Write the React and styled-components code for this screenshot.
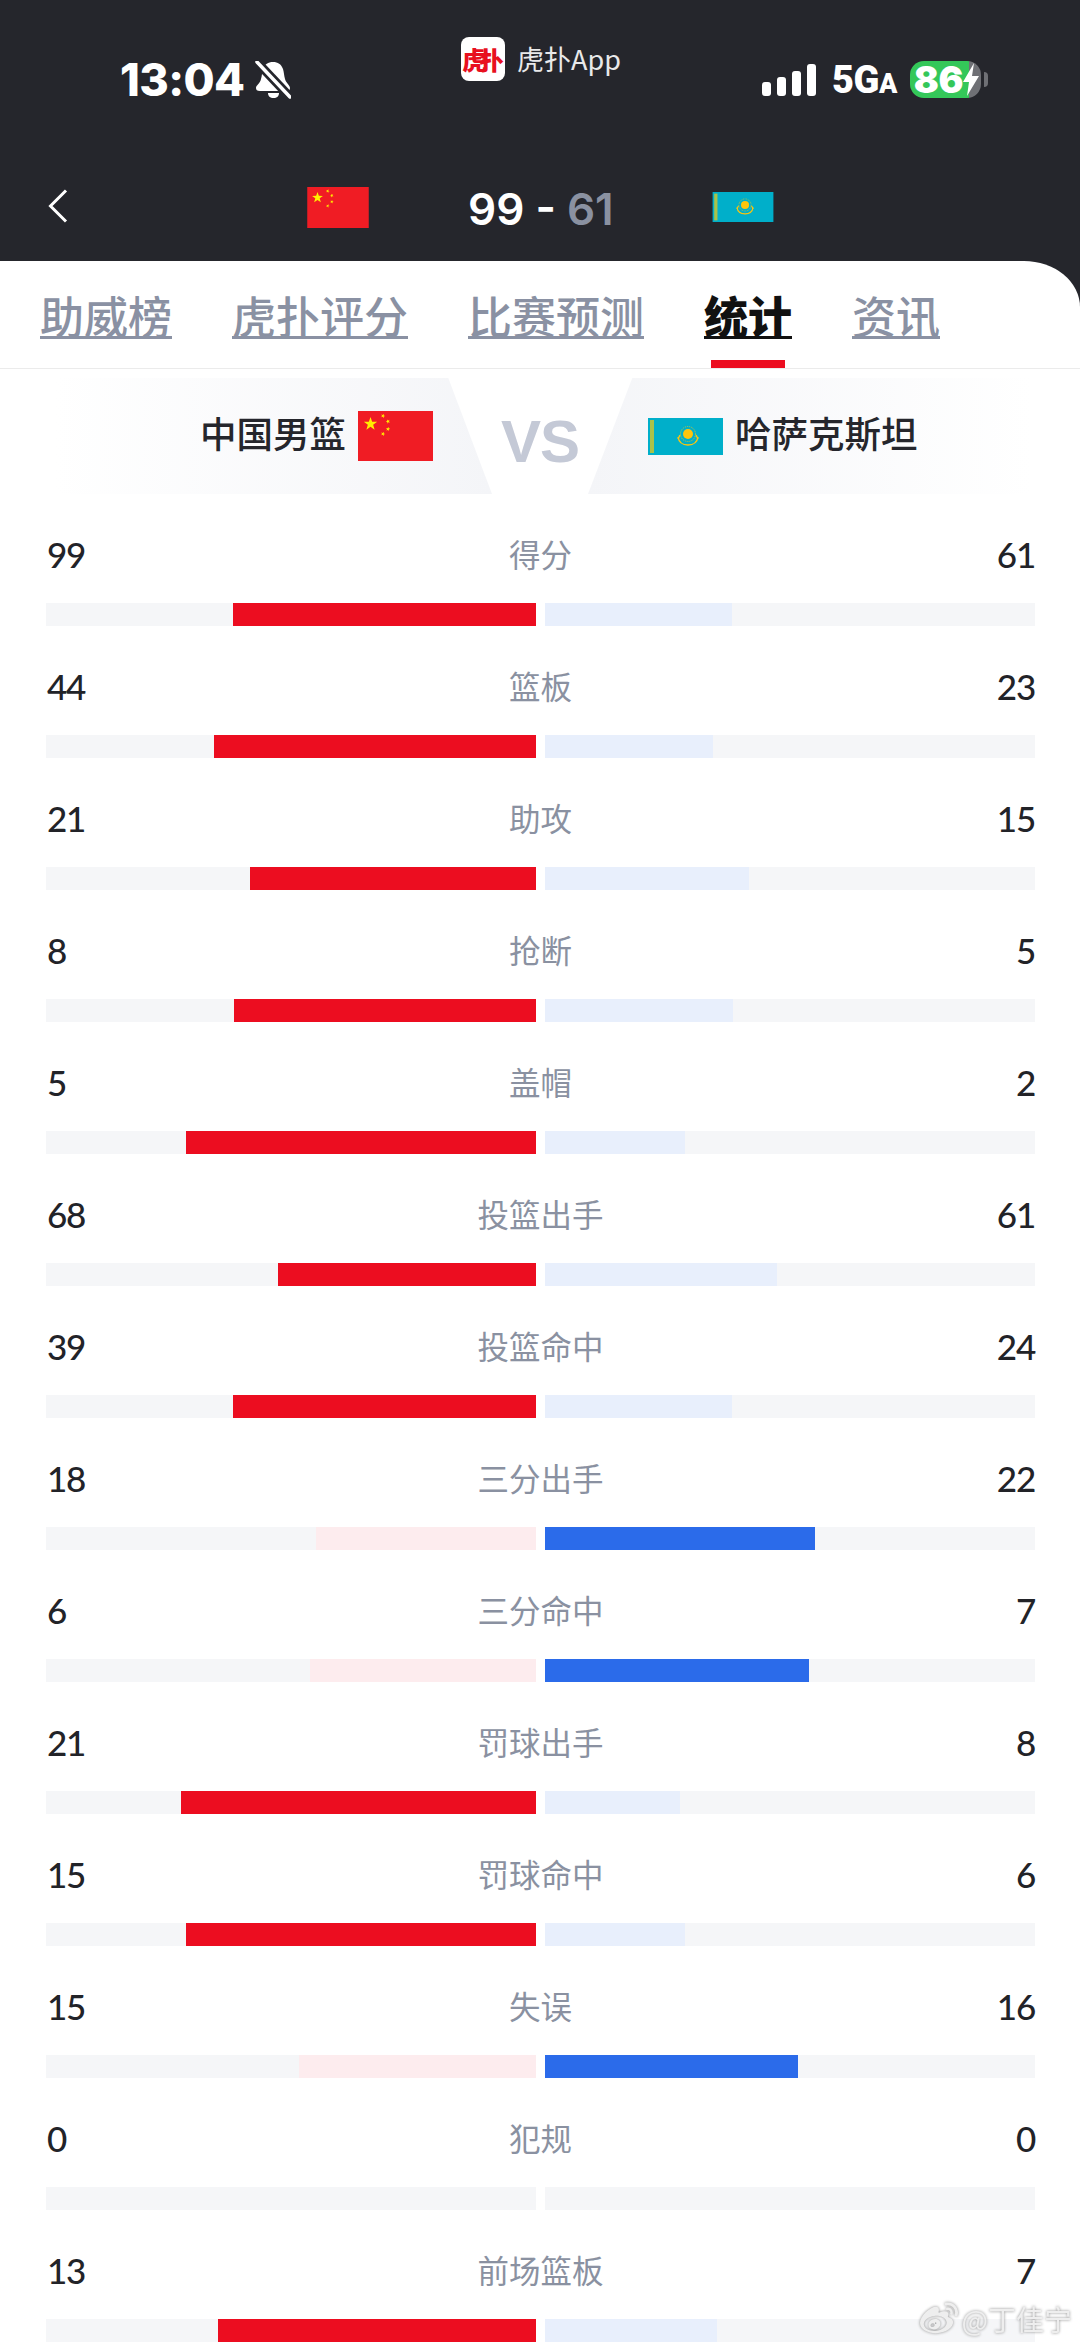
import styled, { createGlobalStyle } from 'styled-components';
import { FaWeibo } from 'react-icons/fa';

const CJK = '"Noto Sans CJK SC", "Noto Sans", sans-serif';

const GlobalStyle = createGlobalStyle`
  html, body {
    margin: 0;
    padding: 0;
    background: #fff;
  }
  #root {
    width: 1080px;
    height: 2347px;
    overflow: hidden;
  }
`;

const Page = styled.div`
  position: relative;
  width: 1080px;
  height: 2347px;
  overflow: hidden;
  background: #25262c;
  font-family: ${CJK};
`;

const Header = styled.header`
  height: 261px;
  color: #fff;
`;

const StatusBar = styled.div`
  display: flex;
  align-items: flex-start;
  height: 160px;
  padding-left: 120px;
`;

const StatusLeft = styled.div`
  display: flex;
  align-items: center;
  gap: 11px;
  width: 341px;
  padding-top: 54px;
`;

const Time = styled.span`
  font: 800 45px/52px Inter, sans-serif;
  letter-spacing: -0.6px;
`;

const AppBadge = styled.div`
  display: flex;
  align-items: center;
  gap: 12px;
  width: 301px;
  padding-top: 37px;
`;

const AppLogo = styled.div`
  display: flex;
  align-items: center;
  justify-content: center;
  width: 44px;
  height: 44px;
  border-radius: 8px;
  background: #fff;
  color: #e8101e;
  font: 900 25px/44px ${CJK};
  letter-spacing: -8px;
  padding-right: 8px;
  box-sizing: border-box;
`;

const AppName = styled.span`
  font-size: 27px;
  line-height: 44px;
  color: #e9e9ea;
`;

const StatusRight = styled.div`
  display: flex;
  align-items: flex-end;
  height: 37px;
  margin-top: 61px;
`;

const Signal = styled.div`
  display: flex;
  align-items: flex-end;
  gap: 6px;
  margin-bottom: 2px;
`;

const SignalBar = styled.i`
  display: block;
  width: 9px;
  height: ${(p) => p.$h}px;
  border-radius: 3px;
  background: #fff;
`;

const Network = styled.span`
  margin-left: 16px;
  margin-bottom: -2px;
  font: 900 38px/32px Roboto, sans-serif;
  letter-spacing: -0.5px;
  & small {
    font-size: 27px;
  }
`;

const Battery = styled.div`
  position: relative;
  display: flex;
  align-items: center;
  width: 71px;
  height: 37px;
  margin-left: 13px;
  padding-left: 4px;
  box-sizing: border-box;
  border-radius: 14px;
  background: linear-gradient(90deg, #34c759 59px, #6f7075 59px);
  font: 900 37px/37px Inter, sans-serif;
  letter-spacing: -0.5px;
  &::after {
    content: '';
    position: absolute;
    right: -7px;
    top: 11px;
    width: 4px;
    height: 15px;
    border-radius: 0 4px 4px 0;
    background: #6f7075;
  }
`;

const ScoreRow = styled.div`
  display: flex;
  align-items: center;
  height: 94px;
  padding-left: 48px;
`;

const BackButton = styled.div`
  display: flex;
  width: 259px;
`;

const ScoreGroup = styled.div`
  display: flex;
  align-items: center;
  gap: 99px;
`;

const Score = styled.div`
  width: 145px;
  padding-top: 3px;
  font: 600 44px/50px Inter, sans-serif;
  white-space: nowrap;
  & span {
    color: #8a91a1;
  }
`;

const Card = styled.main`
  height: 2086px;
  background: #fff;
  border-top-right-radius: 56px 46px;
`;

const Tabs = styled.nav`
  display: flex;
  gap: 60px;
  height: 108px;
  padding-left: 40px;
  border-bottom: 1px solid #ebebeb;
  box-sizing: border-box;
`;

const Tab = styled.div`
  position: relative;
  padding-top: 22px;
  font-size: 44px;
  line-height: 64px;
  font-weight: ${(p) => (p.$active ? 900 : 500)};
  color: ${(p) => (p.$active ? '#111' : '#8a91a3')};
  text-decoration: underline;
  text-decoration-thickness: 3px;
  text-underline-offset: 2px;
  &::after {
    content: ${(p) => (p.$active ? '""' : 'none')};
    position: absolute;
    left: 7px;
    right: 7px;
    bottom: 0;
    height: 8px;
    background: #ec0d20;
  }
`;

const VersusBand = styled.section`
  display: flex;
  height: 116px;
  margin-top: 9px;
  padding-left: 55px;
`;

const TeamSide = styled.div`
  display: flex;
  align-items: center;
  gap: 12px;
  box-sizing: border-box;
  height: 100%;
  font-size: 36.500px;
  font-weight: 500;
  color: #25262c;
  ${(p) =>
    p.$right
      ? `
    width: 443px;
    padding-left: 60px;
    background: linear-gradient(90deg, #f4f5f8, #ffffff);
    clip-path: polygon(10% 0, 100% 0, 100% 100%, 0 100%);
  `
      : `
    width: 437px;
    padding-right: 59px;
    justify-content: flex-end;
    background: linear-gradient(90deg, #ffffff, #f4f5f8);
    clip-path: polygon(0 0, 90% 0, 100% 100%, 0 100%);
  `}
`;

const TeamName = styled.span`
  line-height: 44px;
  margin-top: -7px;
`;

const VersusMark = styled.div`
  width: 96px;
  padding-top: 11px;
  text-align: center;
  font: 700 60px/105px "Liberation Sans", sans-serif;
  letter-spacing: -1px;
  color: #c4c9d6;
  box-sizing: border-box;
  height: 100%;
`;

const StatList = styled.section`
  display: flex;
  flex-direction: column;
  gap: 41px;
  padding: 41px 45px 0 46px;
`;

const StatRow = styled.div`
  display: flex;
  flex-direction: column;
  gap: 28px;
`;

const StatHead = styled.div`
  display: grid;
  grid-template-columns: 1fr auto 1fr;
  align-items: center;
  height: 40px;
`;

const StatValue = styled.span`
  font: 500 35px/40px Lato, Roboto, sans-serif;
  letter-spacing: -1.200px;
  margin-top: -2px;
  color: #222328;
  text-align: ${(p) => (p.$right ? 'right' : 'left')};
  padding: ${(p) => (p.$right ? '0' : '0 0 0 1px')};
`;

const StatLabel = styled.span`
  font-size: 31.500px;
  line-height: 40px;
  margin-top: -4px;
  color: #8a91a1;
`;

const BarPair = styled.div`
  display: grid;
  grid-template-columns: 1fr 1fr;
  gap: 9px;
`;

const BarTrack = styled.div`
  display: flex;
  justify-content: ${(p) => (p.$right ? 'flex-start' : 'flex-end')};
  height: 23px;
  background: #f5f6f8;
`;

const barColors = {
  home: { strong: '#ec0d20', soft: '#fdecee' },
  away: { strong: '#2b6bea', soft: '#e8effc' },
};

const BarFill = styled.div`
  height: 100%;
  background: ${(p) => barColors[p.$side][p.$strong ? 'strong' : 'soft']};
`;

const Watermark = styled.div`
  position: absolute;
  right: 8px;
  bottom: 9px;
  display: flex;
  align-items: center;
  gap: 4px;
  color: #eeeeee;
  font-size: 28px;
  line-height: 34px;
  filter: drop-shadow(0 0 1.500px #8d8d8d);
`;

const stats = [
  ['得分', 99, 61],
  ['篮板', 44, 23],
  ['助攻', 21, 15],
  ['抢断', 8, 5],
  ['盖帽', 5, 2],
  ['投篮出手', 68, 61],
  ['投篮命中', 39, 24],
  ['三分出手', 18, 22],
  ['三分命中', 6, 7],
  ['罚球出手', 21, 8],
  ['罚球命中', 15, 6],
  ['失误', 15, 16],
  ['犯规', 0, 0],
  ['前场篮板', 13, 7],
];

const tabs = ['助威榜', '虎扑评分', '比赛预测', '统计', '资讯'];

const Star = ({ x, y, r, rot = 0 }) => {
  const points = [];
  for (let i = 0; i < 10; i++) {
    const rad = i % 2 ? r * 0.4 : r;
    const a = ((-90 + rot + i * 36) * Math.PI) / 180;
    points.push(`${x + rad * Math.cos(a)},${y + rad * Math.sin(a)}`);
  }
  return <polygon points={points.join(' ')} fill="#ffee00" />;
};

const ChinaFlag = ({ w, h }) => (
  <svg width={w} height={h} viewBox="0 0 75 50" style={{ flexShrink: 0, display: 'block' }}>
    <rect width="75" height="50" fill="#f01c24" />
    <Star x={12.5} y={13} r={7} />
    <Star x={25} y={5} r={2.3} rot={20} />
    <Star x={30} y={10.5} r={2.3} rot={45} />
    <Star x={30} y={18} r={2.3} rot={10} />
    <Star x={25} y={23} r={2.3} rot={20} />
  </svg>
);

const KazakhFlag = ({ w, h }) => (
  <svg width={w} height={h} viewBox="0 0 75 37" style={{ flexShrink: 0, display: 'block' }}>
    <rect width="75" height="37" fill="#00afca" />
    <rect x="2" y="2" width="4" height="33" fill="#a9c24a" />
    <circle cx="40" cy="16" r="5" fill="#fec50c" />
    <circle cx="40" cy="16" r="7.5" fill="none" stroke="#fec50c" strokeWidth="0.8" strokeDasharray="1 1" />
    <path d="M30 19c1 6 5 8 10 8s9-2 10-8" fill="none" stroke="#fec50c" strokeWidth="1.4" />
    <path d="M32 17l-2 4M48 17l2 4" stroke="#fec50c" strokeWidth="1.4" />
  </svg>
);

const BellSlash = () => (
  <svg width="36" height="38" viewBox="0 0 36 38" style={{ display: 'block' }}>
    <path
      d="M18 1c5 0 8 2 10 7 1 3 1 7 2 10 1 4 5 6 5 9 0 2-1 3-3 3H5c-3 0-4-1-4-3 0-3 4-4 5-9 1-3 1-7 2-10 2-5 5-7 10-7z"
      fill="#fff"
    />
    <path d="M13 32h11c0 3-2 5-5.500 5S13 35 13 32z" fill="#fff" />
    <path d="M1 0l34 36" stroke="#25262c" strokeWidth="9" />
    <path d="M2 1l33 35" stroke="#fff" strokeWidth="3.500" strokeLinecap="round" />
  </svg>
);

const Bolt = () => (
  <svg width="18" height="33" viewBox="0 0 18 33" style={{ display: 'block', marginLeft: '-1px', flexShrink: 0 }}>
    <path d="M12 0L1 19h6L5 33l12-20h-7z" fill="#fff" />
  </svg>
);

const BackIcon = () => (
  <svg width="20" height="34" viewBox="0 0 20 34" style={{ display: 'block', marginTop: '-2px' }}>
    <path d="M18 1.500L2.500 17 18 32.500" fill="none" stroke="#fff" strokeWidth="3" />
  </svg>
);

const StatBlock = ({ label, home, away }) => {
  const total = home + away;
  const homePct = total ? (home / total) * 100 : 0;
  const awayPct = total ? (away / total) * 100 : 0;
  return (
    <StatRow>
      <StatHead>
        <StatValue>{home}</StatValue>
        <StatLabel>{label}</StatLabel>
        <StatValue $right>{away}</StatValue>
      </StatHead>
      <BarPair>
        <BarTrack>
          <BarFill $side="home" $strong={home > away} style={{ width: `${homePct}%` }} />
        </BarTrack>
        <BarTrack $right>
          <BarFill $side="away" $strong={away > home} style={{ width: `${awayPct}%` }} />
        </BarTrack>
      </BarPair>
    </StatRow>
  );
};

const App = () => (
  <Page>
    <GlobalStyle />
    <Header>
      <StatusBar>
        <StatusLeft>
          <Time>13:04</Time>
          <BellSlash />
        </StatusLeft>
        <AppBadge>
          <AppLogo>虎扑</AppLogo>
          <AppName>虎扑App</AppName>
        </AppBadge>
        <StatusRight>
          <Signal>
            <SignalBar $h={14} />
            <SignalBar $h={19} />
            <SignalBar $h={25} />
            <SignalBar $h={32} />
          </Signal>
          <Network>
            5G<small>A</small>
          </Network>
          <Battery>
            86
            <Bolt />
          </Battery>
        </StatusRight>
      </StatusBar>
      <ScoreRow>
        <BackButton>
          <BackIcon />
        </BackButton>
        <ScoreGroup>
          <ChinaFlag w={62} h={41} />
          <Score>
            99 - <span>61</span>
          </Score>
          <KazakhFlag w={62} h={30} />
        </ScoreGroup>
      </ScoreRow>
    </Header>
    <Card>
      <Tabs>
        {tabs.map((tab) => (
          <Tab key={tab} $active={tab === '统计'}>
            {tab}
          </Tab>
        ))}
      </Tabs>
      <VersusBand>
        <TeamSide>
          <TeamName>中国男篮</TeamName>
          <ChinaFlag w={75} h={50} />
        </TeamSide>
        <VersusMark>VS</VersusMark>
        <TeamSide $right>
          <KazakhFlag w={75} h={37} />
          <TeamName>哈萨克斯坦</TeamName>
        </TeamSide>
      </VersusBand>
      <StatList>
        {stats.map(([label, home, away]) => (
          <StatBlock key={label} label={label} home={home} away={away} />
        ))}
      </StatList>
    </Card>
    <Watermark>
      <FaWeibo size={38} />
      <span>@丁佳宁</span>
    </Watermark>
  </Page>
);

export default App;
